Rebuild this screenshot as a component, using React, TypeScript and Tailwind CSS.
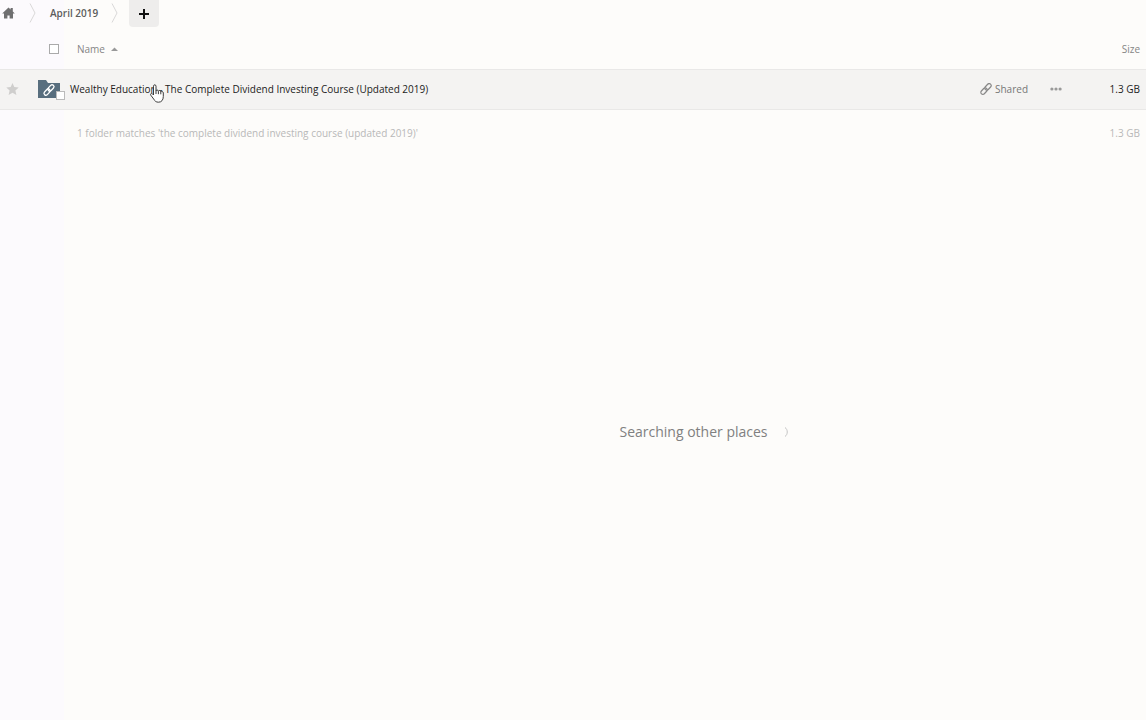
import { useState } from 'react'

interface Folder {
  id: string
  name: string
  size: string
}

const folders: Folder[] = [
  { id: '1', name: 'Wealthy Education - The Complete Dividend Investing Course (Updated 2019)', size: '1.3 GB' },
]

function HomeIcon() {
  return (
    <svg width="13" height="12" viewBox="0 0 13 12" fill="#6f6f70" aria-hidden="true">
      <path d="M6.5 0.5L0.2 6.4h1.8V11.5h3.4V8.4h2.2v3.1h3.4V6.4h1.8L10.8 4.4V1H8.6v1.5z" />
    </svg>
  )
}

function Separator() {
  return (
    <svg width="8" height="20" viewBox="0 0 8 20" fill="none" stroke="#d9d8d8" aria-hidden="true">
      <path d="M1 0.5L6 10L1 19.5" />
    </svg>
  )
}

function LinkIcon() {
  return (
    <svg width="12" height="12" viewBox="0 0 12 12" fill="none" stroke="#888" strokeWidth="1.2" aria-hidden="true">
      <g transform="rotate(-47 6 6)">
        <rect x="-0.6" y="4" width="7.4" height="4" rx="2" />
        <rect x="5.2" y="4" width="7.4" height="4" rx="2" />
      </g>
    </svg>
  )
}

function FolderIcon() {
  return (
    <svg width="22" height="20" viewBox="0 0 22 20" aria-hidden="true">
      <path d="M0 1h8l2 3h12v15H0z" fill="#586e7e" />
      <g transform="rotate(-47 11 11)" fill="none" stroke="#fff" strokeWidth="1.3">
        <rect x="4.6" y="9.1" width="7.2" height="3.8" rx="1.9" />
        <rect x="10.2" y="9.1" width="7.2" height="3.8" rx="1.9" />
      </g>
    </svg>
  )
}

function HandCursor() {
  return (
    <svg
      className="pointer-events-none absolute top-[15px] left-20"
      width="14"
      height="19"
      viewBox="0 0 14 19"
      fill="#fff"
      stroke="#3c3c3c"
      strokeLinejoin="round"
      aria-hidden="true"
    >
      <path d="M3.5 11V2.2C3.5 0.3 6 0.3 6 2.2V7C6.2 5.6 8.3 5.8 8.4 7.2 8.8 6 10.7 6.3 10.8 7.8 11.5 7 13.3 7.4 13.3 9V12.5C13.3 16 11.5 18.2 8.5 18.2 6 18.2 4.8 17 3.8 15.2L0.8 11.2C0 9.8 1.5 8.7 2.5 9.8z" />
      <path d="M6 7v3M8.4 7.2v3M10.8 7.8v2.5" fill="none" />
    </svg>
  )
}

export default function App() {
  const [selected, setSelected] = useState<string[]>([])
  const allSelected = selected.length === folders.length

  const toggle = (id: string) => {
    setSelected((prev) => (prev.includes(id) ? prev.filter((s) => s !== id) : [...prev, id]))
  }

  return (
    <div className="flex min-h-screen flex-col bg-[linear-gradient(to_right,#fcfafd_64px,#fdfcfa_64px)] font-['Open_Sans',sans-serif] text-[10px] leading-4 text-[#858585]">
      {/* Breadcrumbs */}
      <nav className="flex h-[30px] items-start" aria-label="Breadcrumb">
        <div className="flex h-[26px] items-center">
          <a href="#home" aria-label="Home" className="ml-0.5 mr-3.5">
            <HomeIcon />
          </a>
          <Separator />
          <a href="#april" className="mx-[13px] font-semibold text-[#5c5c5c]">April 2019</a>
          <Separator />
        </div>
        <button
          type="button"
          aria-label="Add"
          className="ml-2.5 flex h-[27px] w-[30px] items-center justify-center rounded-b bg-[#eeedec]"
        >
          <svg width="10" height="10" viewBox="0 0 10 10" stroke="#111" strokeWidth="2" aria-hidden="true">
            <path d="M5 0v10M0 5h10" />
          </svg>
        </button>
      </nav>

      <table className="w-full table-fixed border-collapse">
        <colgroup>
          <col className="w-[38px]" />
          <col className="w-8" />
          <col />
          <col className="w-[70px]" />
          <col className="w-[60px]" />
        </colgroup>
        <thead>
          <tr className="h-[39px]">
            <th />
            <th className="text-left">
              <input
                type="checkbox"
                aria-label="Select all"
                checked={allSelected}
                onChange={() => setSelected(allSelected ? [] : folders.map((f) => f.id))}
                className="ml-[11px] block size-2.5 appearance-none border border-[#aaa] bg-white checked:bg-[#586e7e]"
              />
            </th>
            <th className="pl-[7px] text-left font-normal">
              <button type="button" className="flex items-center gap-1.5">
                Name
                <svg width="7" height="4" viewBox="0 0 7 4" fill="#999" aria-hidden="true">
                  <path d="M0 4L3.5 0.5L7 4z" />
                </svg>
              </button>
            </th>
            <th />
            <th className="pr-1.5 text-right font-normal">Size</th>
          </tr>
        </thead>
        <tbody>
          {folders.map((folder) => (
            <tr key={folder.id} className="h-10 border-y border-[#e9e8e7] bg-[#f4f3f2]">
              <td>
                <button type="button" aria-label="Favorite" className="ml-1.5 block">
                  <svg width="13" height="12" viewBox="0 0 13 12" fill="#cfcecd" aria-hidden="true">
                    <path d="M6.5 0l1.8 4.1 4.4.5-3.3 3 1 4.4-3.9-2.3L2.6 12l1-4.4-3.3-3 4.4-.5z" />
                  </svg>
                </button>
              </td>
              <td>
                <div className="relative w-[27px]">
                  <FolderIcon />
                  <input
                    type="checkbox"
                    aria-label={`Select ${folder.name}`}
                    checked={selected.includes(folder.id)}
                    onChange={() => toggle(folder.id)}
                    className="absolute right-0 -bottom-px size-[9px] appearance-none border border-[#bbb] bg-white checked:bg-[#586e7e]"
                  />
                </div>
              </td>
              <td>
                <div className="relative -mr-3 flex items-center justify-between">
                  <a href="#folder" className="text-[#1c1c1c]">{folder.name}</a>
                  <div className="absolute inset-x-0 -top-3">
                    <HandCursor />
                  </div>
                  <button type="button" className="flex items-center gap-[3px] text-[#777]">
                    <LinkIcon />
                    Shared
                  </button>
                </div>
              </td>
              <td>
                <button type="button" aria-label="More" className="ml-[34px] block">
                  <svg width="12" height="4" viewBox="0 0 12 4" fill="#999" aria-hidden="true">
                    <circle cx="1.9" cy="2" r="1.6" />
                    <circle cx="6" cy="2" r="1.6" />
                    <circle cx="10.1" cy="2" r="1.6" />
                  </svg>
                </button>
              </td>
              <td className="pr-1.5 text-right text-[#1c1c1c]">{folder.size}</td>
            </tr>
          ))}
        </tbody>
        <tfoot>
          <tr className="h-12 text-[#b8b8b8]">
            <td colSpan={2} />
            <td className="pl-[7px]">1 folder matches 'the complete dividend investing course (updated 2019)'</td>
            <td />
            <td className="pr-1.5 text-right">1.3 GB</td>
          </tr>
        </tfoot>
      </table>

      {/* Search status */}
      <div className="flex flex-1 items-center justify-center gap-4 pb-3.5 pl-[262px]" role="status">
        <span className="text-sm text-[#808080]">Searching other places</span>
        <svg width="5" height="10" viewBox="0 0 5 10" fill="none" stroke="#c4c4c4" aria-hidden="true">
          <path d="M1 0.5C4 2.5 4 7.5 1 9.5" />
        </svg>
      </div>
    </div>
  )
}
